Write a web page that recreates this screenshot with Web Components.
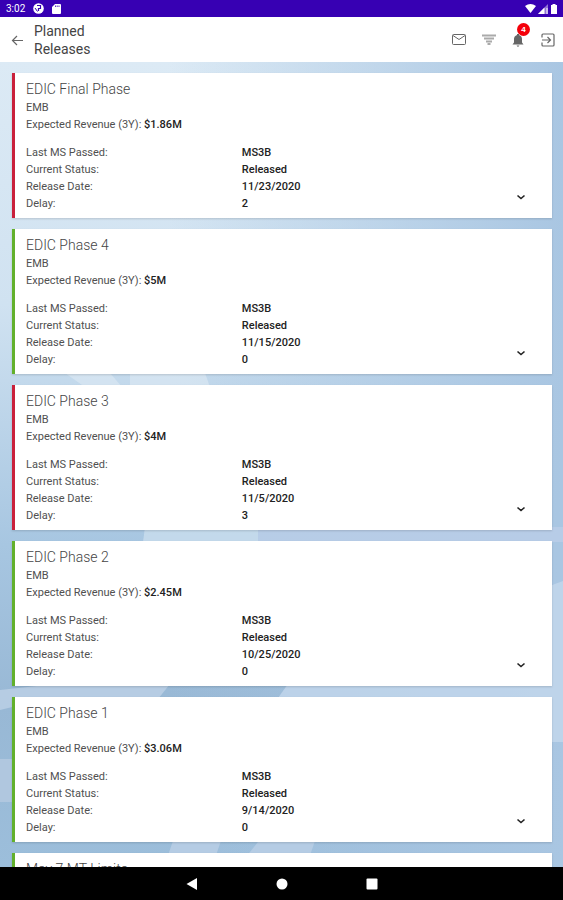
<!DOCTYPE html>
<html lang="en">
<head>
  <meta charset="UTF-8">
  <meta name="viewport" content="width=device-width, initial-scale=1.0">
  <title>Planned Releases</title>
  <style>
    body {
      margin: 0;
      font-family: Roboto, "Liberation Sans", sans-serif;
      color: #444;
    }
  </style>
</head>
<body>
  <releases-app>
    <status-bar slot="top" time="3:02"></status-bar>
    <app-header slot="top" alerts="4">Planned Releases</app-header>

    <release-card color="#c9203b" revenue="$1.86M" milestone="MS3B" status="Released" date="11/23/2020" delay="2">EDIC Final Phase</release-card>
    <release-card color="#62b02c" revenue="$5M" milestone="MS3B" status="Released" date="11/15/2020" delay="0">EDIC Phase 4</release-card>
    <release-card color="#c9203b" revenue="$4M" milestone="MS3B" status="Released" date="11/5/2020" delay="3">EDIC Phase 3</release-card>
    <release-card color="#62b02c" revenue="$2.45M" milestone="MS3B" status="Released" date="10/25/2020" delay="0">EDIC Phase 2</release-card>
    <release-card color="#62b02c" revenue="$3.06M" milestone="MS3B" status="Released" date="9/14/2020" delay="0">EDIC Phase 1</release-card>
    <release-card color="#62b02c">May 7 MT Limits</release-card>

    <nav-bar slot="bottom"></nav-bar>
  </releases-app>

  <script>
    class ReleasesApp extends HTMLElement {
      connectedCallback() {
        this.attachShadow({ mode: 'open' });
        this.shadowRoot.innerHTML = `
          <style>
            :host {
              display: flex;
              flex-direction: column;
              height: 100vh;
              overflow: hidden;
            }

            main {
              flex: 1;
              min-height: 0;
              position: relative;
              overflow: hidden;
            }

            .backdrop {
              position: absolute;
              inset: 0;
              width: 100%;
              height: 100%;
            }

            .list {
              position: relative;
              display: flex;
              flex-direction: column;
              gap: 11px;
              padding: 11px 11px 0 12px;
            }
          </style>

          <slot name="top"></slot>
          <main>
            <svg class="backdrop" viewBox="0 0 563 805" preserveAspectRatio="none" aria-hidden="true">
              <defs>
                <linearGradient id="sky" x1="0" y1="0" x2="0" y2="1">
                  <stop offset="0" stop-color="#dceaf5"/>
                  <stop offset=".3" stop-color="#d0e2f1"/>
                  <stop offset=".6" stop-color="#a7c6e1"/>
                  <stop offset=".8" stop-color="#98b8d5"/>
                  <stop offset="1" stop-color="#9cbedb"/>
                </linearGradient>
                <linearGradient id="side" x1="0" y1="0" x2="1" y2="0">
                  <stop offset=".3" stop-color="#a9c6e2" stop-opacity="0"/>
                  <stop offset="1" stop-color="#a9c6e2"/>
                </linearGradient>
              </defs>
              <rect width="563" height="805" fill="url(#sky)"/>
              <rect width="563" height="805" fill="url(#side)"/>
              <path d="M65 311H110L122 325H85Z" fill="#e4eef6" opacity=".5"/>
              <path d="M130 311H205L210 325H130Z" fill="#e4eef6" opacity=".5"/>
              <path d="M145 465H258V480H143Z" fill="#cfe1ef" opacity=".7"/>
              <path d="M258 465H563V480H258Z" fill="#c2d1eb" opacity=".6"/>
              <path d="M0 628L55 622H170L158 637H45L0 648Z" fill="#bdd1e6" opacity=".8"/>
              <path d="M290 619L563 519V680H300L278 636Z" fill="#c3d7ec" opacity=".8"/>
              <path d="M0 697H12V740H0Z" fill="#b0c7df"/>
              <path d="M176 770H224L212 805H164Z" fill="#b5cce4"/>
              <path d="M266 770H318L306 805H238Z" fill="#b5cce4"/>
            </svg>
            <div class="list"><slot></slot></div>
          </main>
          <slot name="bottom"></slot>
        `;
      }
    }

    class StatusBar extends HTMLElement {
      connectedCallback() {
        this.attachShadow({ mode: 'open' });
        this.shadowRoot.innerHTML = `
          <style>
            :host {
              flex: none;
              display: flex;
              align-items: center;
              gap: 8px;
              height: 17px;
              padding: 0 5px 0 6px;
              background: #3700b3;
              color: #fff;
              font-size: 10px;
              line-height: 17px;
            }

            svg {
              display: block;
              fill: currentColor;
            }

            .system {
              display: flex;
              align-items: center;
              gap: 2px;
              margin-left: auto;
            }
          </style>

          <span>${this.getAttribute('time')}</span>
          <svg width="11" height="11" viewBox="0 0 11 11">
            <circle cx="5.500" cy="5.500" r="5.300"/>
            <path d="M4 2.500H7.500V5.500H5.500V8" fill="none" stroke="#3700b3" stroke-width="1.200"/>
            <path d="M2 5L4.500 8.500" stroke="#3700b3"/>
          </svg>
          <svg width="9" height="10" viewBox="0 0 9 10">
            <path d="M3 0H8Q9 0 9 1V9Q9 10 8 10H1Q0 10 0 9V3Z"/>
            <path d="M3.500 1.500V3M5.200 1.500V3M7 1.500V3" stroke="#3700b3" stroke-width=".8"/>
          </svg>
          <div class="system">
            <svg width="11" height="9" viewBox="0 0 11 9"><path d="M0 2Q5.500-2 11 2L5.500 9Z"/></svg>
            <svg width="10" height="10" viewBox="0 0 10 10">
              <path d="M0 10L10 0V10Z" opacity=".45"/>
              <path d="M0 10L6.500 3.500V10Z"/>
              <path d="M9 4V10" stroke="#fff"/>
            </svg>
            <svg width="8" height="10" viewBox="0 0 8 10"><path d="M2.500 0H5.500V1H7V10H1V1H2.500Z"/></svg>
          </div>
        `;
      }
    }

    class AppHeader extends HTMLElement {
      connectedCallback() {
        this.attachShadow({ mode: 'open' });
        this.shadowRoot.innerHTML = `
          <style>
            :host {
              flex: none;
              display: flex;
              align-items: center;
              height: 45px;
              padding: 0 6px 0 8px;
              background: #fff;
              color: #444;
            }

            h1 {
              width: 80px;
              margin: 0 auto 0 8px;
              font-size: 14px;
              font-weight: 400;
              line-height: 18px;
            }

            button {
              display: block;
              position: relative;
              padding: 0;
              border: 0;
              background: none;
              color: #666;
            }

            svg {
              display: block;
              width: 18px;
              height: 18px;
              fill: none;
              stroke: currentColor;
            }

            .actions {
              display: flex;
              gap: 12px;
            }

            .badge {
              position: absolute;
              top: -8px;
              right: -3px;
              width: 13px;
              height: 13px;
              border-radius: 50%;
              background: #f40009;
              color: #fff;
              font-size: 8px;
              font-weight: 700;
              line-height: 13px;
              text-align: center;
            }
          </style>

          <button type="button" aria-label="Back">
            <svg viewBox="0 0 18 18"><path d="M15 9.500H4.500M9 5L4.500 9.500L9 14" stroke-width="1.200"/></svg>
          </button>
          <h1><slot></slot></h1>
          <div class="actions">
            <button type="button" aria-label="Messages">
              <svg viewBox="0 0 18 18"><rect x="3.500" y="3.500" width="13" height="10" rx="1"/><path d="M4 4.500L10 8.500L16 4.500"/></svg>
            </button>
            <button type="button" aria-label="Filter">
              <svg viewBox="0 0 18 18"><path d="M3 4.500H17M5 7.500H15M7 10.500H13M8.500 13H11.500" stroke="#aaa" stroke-width="2.200"/></svg>
            </button>
            <button type="button" aria-label="Notifications">
              <svg viewBox="0 0 18 18"><path d="M3.500 13.500L5 11.500V8Q5 5 8 4V3H10V4Q13 5 13 8V11.500L14.500 13.500Z M7.500 14.500H10.500L9 16Z" fill="#666" stroke="none"/></svg>
              <span class="badge">${this.getAttribute('alerts')}</span>
            </button>
            <button type="button" aria-label="Sign out">
              <svg viewBox="0 0 18 18"><path d="M3 6.500V4Q3 3 4 3H14Q15 3 15 4V14Q15 15 14 15H4Q3 15 3 14V11.500M3 9H11M8.500 6L11.500 9L8.500 12" stroke-width="1.200"/></svg>
            </button>
          </div>
        `;
      }
    }

    class ReleaseCard extends HTMLElement {
      connectedCallback() {
        const value = (name) => this.getAttribute(name) || '';
        this.attachShadow({ mode: 'open' });
        this.shadowRoot.innerHTML = `
          <style>
            :host {
              display: block;
              position: relative;
              box-sizing: border-box;
              min-height: 145px;
              padding: 7px 8px 6px 11px;
              border-left: 3px solid ${value('color')};
              background: #fff;
              box-shadow: 0 1px 2px rgba(0, 0, 0, .15);
              color: #505050;
              font-size: 11px;
              line-height: 17px;
            }

            h2 {
              margin: 0 0 1px;
              color: #444;
              font-size: 14px;
              font-weight: 300;
              line-height: 18px;
            }

            p,
            dl,
            dd {
              margin: 0;
            }

            dl {
              display: grid;
              grid-template-columns: 5fr 7fr;
              margin-top: 11px;
            }

            dd,
            strong {
              color: #222;
              font-weight: 500;
            }

            button {
              position: absolute;
              right: 23px;
              bottom: 13px;
              padding: 0;
              border: 0;
              background: none;
            }

            svg {
              display: block;
              fill: none;
              stroke: #222;
            }
          </style>

          <h2><slot></slot></h2>
          ${this.hasAttribute('revenue') ? `
            <p>EMB</p>
            <p>Expected Revenue (3Y): <strong>${value('revenue')}</strong></p>
            <dl>
              <dt>Last MS Passed:</dt><dd>${value('milestone')}</dd>
              <dt>Current Status:</dt><dd>${value('status')}</dd>
              <dt>Release Date:</dt><dd>${value('date')}</dd>
              <dt>Delay:</dt><dd>${value('delay')}</dd>
            </dl>
            <button type="button" aria-label="Show details">
              <svg width="16" height="16" viewBox="0 0 16 16"><path d="M4.500 6.500L8 9.500L11.500 6.500" stroke-width="1.600"/></svg>
            </button>
          ` : ''}
        `;
      }
    }

    class NavBar extends HTMLElement {
      connectedCallback() {
        this.attachShadow({ mode: 'open' });
        this.shadowRoot.innerHTML = `
          <style>
            :host {
              flex: none;
              display: flex;
              align-items: center;
              justify-content: center;
              gap: 74px;
              height: 33px;
              background: #000;
            }

            button {
              padding: 0;
              border: 0;
              background: none;
            }

            svg {
              display: block;
              fill: #fff;
            }
          </style>

          <button type="button" aria-label="Back"><svg width="16" height="16" viewBox="0 0 16 16"><path d="M2.500 8L13 2V14Z"/></svg></button>
          <button type="button" aria-label="Home"><svg width="16" height="16" viewBox="0 0 16 16"><circle cx="8" cy="8" r="5.500"/></svg></button>
          <button type="button" aria-label="Overview"><svg width="16" height="16" viewBox="0 0 16 16"><rect x="2.500" y="2.500" width="11" height="11" rx="1"/></svg></button>
        `;
      }
    }

    customElements.define('releases-app', ReleasesApp);
    customElements.define('status-bar', StatusBar);
    customElements.define('app-header', AppHeader);
    customElements.define('release-card', ReleaseCard);
    customElements.define('nav-bar', NavBar);
  </script>
</body>
</html>
